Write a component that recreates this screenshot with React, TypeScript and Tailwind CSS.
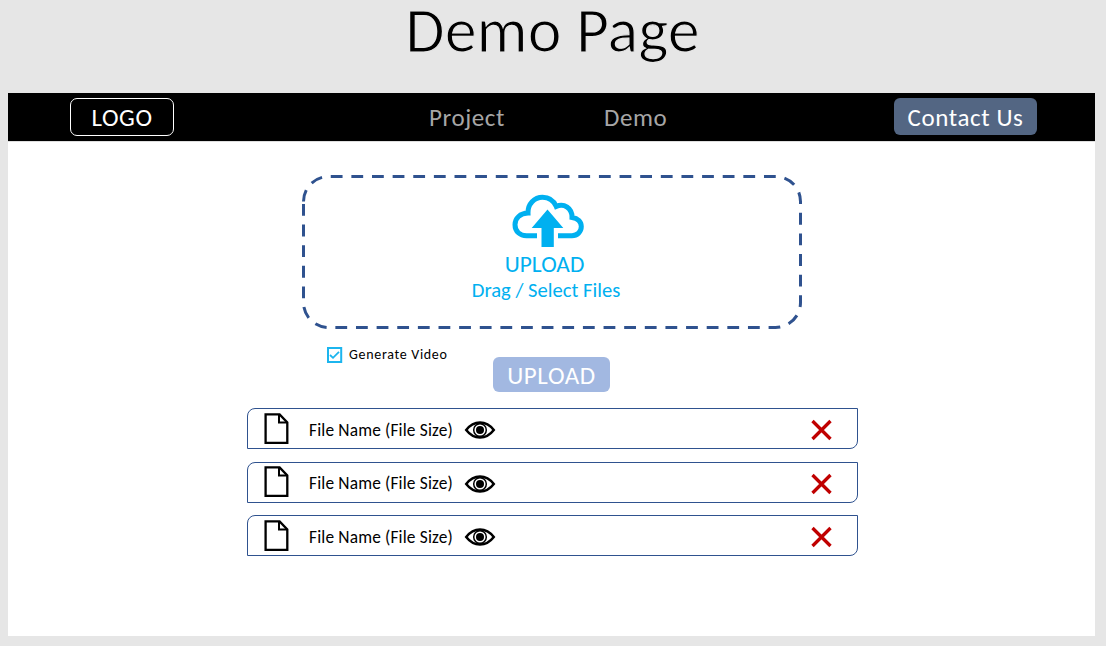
import React from 'react';

function CloudUpload() {
  return (
    <svg width="72" height="54" viewBox="0 0 72 54" fill="none" className="block">
      <path
        d="M25 41.7H14.5C8 41.7 3 37.5 3 30.7C3 24 8.2 19.4 16 19.1C15.6 10 22.5 3.2 30.5 3.2C36.8 3.2 41.8 6.7 44.2 12.4C52 8.8 60.3 14.2 60 23.4C66 24.2 69.3 27.8 69.3 32.6C69.3 38 65.2 41.7 60 41.7H46"
        stroke="#00b0f0"
        strokeWidth="5"
      />
      <path d="M35.5 15.4L51.3 34H41.8V53H29.5V34H19.7Z" fill="#00b0f0" />
    </svg>
  );
}

function FileIcon() {
  return (
    <svg width="26" height="32" viewBox="0 0 26 32" fill="none" stroke="#000" className="block">
      <path d="M1.6 1.4H15.6L23.3 9.4V29.9H1.6Z" strokeWidth="2.3" />
      <path d="M15 1.4V9.5H23.3" strokeWidth="2" />
    </svg>
  );
}

function EyeIcon() {
  return (
    <svg width="32" height="20" viewBox="0 0 32 20" fill="none" stroke="#000" className="block">
      <path d="M2.2 10C6.2 4.8 10.8 2.5 16 2.5S25.8 4.8 29.8 10C25.8 15.2 21.2 17.5 16 17.5S6.2 15.2 2.2 10Z" strokeWidth="2.5" />
      <circle cx="16" cy="10" r="6.3" strokeWidth="1.5" />
      <circle cx="16" cy="10" r="4" fill="#000" stroke="none" />
    </svg>
  );
}

function FileRow() {
  return (
    <div className="flex h-[41px] w-[611px] items-center rounded-tl-[8px] rounded-br-[8px] border border-[#2f528f] pl-[16px] pr-[25px]">
      <FileIcon />
      <span className="ml-[19px] mt-[2.5px] w-[155px] whitespace-nowrap text-[17.33px] leading-5 tracking-[0.17px]">File Name (File Size)</span>
      <span className="mt-[3px]"><EyeIcon /></span>
      <svg width="22" height="22" viewBox="0 0 22 22" className="ml-auto mt-[3px] block">
        <path d="M2.5 2L20.5 20M20.5 2L2.5 20" stroke="#c00000" strokeWidth="3.3" />
      </svg>
    </div>
  );
}

export default function App() {
  return (
    <div className="h-[646px] w-[1106px] overflow-hidden bg-[#e6e6e6] pl-2 font-[Carlito,Lato,sans-serif] text-black">
      <h1 className="flex h-[93px] w-[1089px] justify-center whitespace-nowrap text-[64px] leading-[60px] [-webkit-text-stroke:1.2px_#e6e6e6]">Demo Page</h1>
      <div className="h-[543px] w-[1087px] bg-white">
        <header className="flex h-[49px] items-start border-b border-[#dedede] bg-black pt-[5px] text-[25px] leading-[38px] tracking-[0.6px]">
          <div className="ml-[62px] flex h-[38px] w-[104px] items-center justify-center rounded-[7px] border border-white pt-[2px] text-white">LOGO</div>
          <nav className="flex whitespace-nowrap text-[#a6a6a6]">
            <span className="ml-[255px] w-[175px] pt-px">Project</span>
            <span className="w-[290px] pt-px">Demo</span>
          </nav>
          <button className="flex h-[37px] w-[143px] items-center justify-center whitespace-nowrap rounded-[6px] bg-[#536683] pt-[3px] text-white">Contact Us</button>
        </header>
        <main className="flex flex-col items-start">
          <section className="ml-[294px] mt-[33px] grid h-[154px] w-[500px]">
            <svg width="500" height="154" className="col-start-1 row-start-1 block">
              <path
                d="M1.5 26.5A25 25 0 0 1 26.5 1.5H473.5A25 25 0 0 1 498.5 26.5V127.5A25 25 0 0 1 473.5 152.5H26.5A25 25 0 0 1 1.5 127.5Z"
                fill="none"
                stroke="#2f528f"
                strokeWidth="3"
                strokeDasharray="11.8 8.83"
              />
            </svg>
            <div className="col-start-1 row-start-1 flex flex-col items-center pr-[8px] pt-[19px] text-[#00b0f0]">
              <CloudUpload />
              <span className="mr-[7px] mt-[3px] text-[23.4px] leading-[27px]">UPLOAD</span>
              <span className="mr-[4px] whitespace-nowrap text-[20.6px] leading-[24px]">Drag / Select Files</span>
            </div>
          </section>
          <div className="ml-[319px] mt-[17px] flex h-[46px] items-start">
            <svg width="16" height="16" viewBox="0 0 16 16" fill="none" stroke="#1cb5ee" className="mt-[1px] block">
              <rect x="1" y="1" width="13.2" height="14" strokeWidth="2" />
              <path d="M3 8L6 10.8L12 4.8" strokeWidth="1.8" />
            </svg>
            <span className="ml-[6px] w-[144px] whitespace-nowrap text-[14px] leading-[18px] tracking-[0.7px]">Generate Video</span>
            <button className="mt-[11px] flex h-[35px] w-[117px] items-center justify-center rounded-[6px] bg-[#a2b8e1] pt-[2px] text-[25px] leading-8 tracking-[0.6px] text-white">UPLOAD</button>
          </div>
          <div className="ml-[239px] mt-[16px] flex flex-col gap-[12.5px]">
            <FileRow />
            <FileRow />
            <FileRow />
          </div>
        </main>
      </div>
    </div>
  );
}
